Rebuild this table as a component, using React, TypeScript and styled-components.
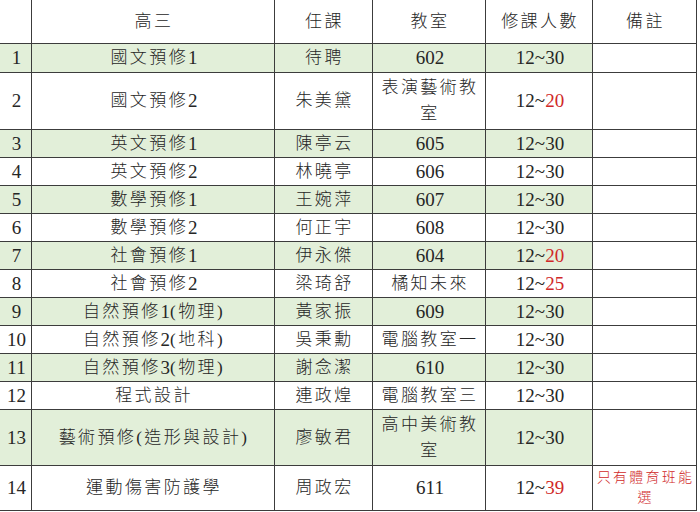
import styled, { createGlobalStyle } from "styled-components";

const GlobalStyle = createGlobalStyle`
    html, body {
        margin: 0;
        padding: 0;
        background: #ffffff;
    }
    body {
        font-family: "Liberation Serif", "Noto Sans CJK TC", serif;
        color: #262626;
    }
`;

type Course = {
    no: number;
    name: string;
    teacher: string;
    room: string;
    limit: number;
    redLimit?: boolean;
    note?: string;
    height: number;
};

const courses: Course[] = [
    { no: 1, name: "國文預修1", teacher: "待聘", room: "602", limit: 30, height: 29 },
    { no: 2, name: "國文預修2", teacher: "朱美黛", room: "表演藝術教室", limit: 20, redLimit: true, height: 57 },
    { no: 3, name: "英文預修1", teacher: "陳亭云", room: "605", limit: 30, height: 28 },
    { no: 4, name: "英文預修2", teacher: "林曉亭", room: "606", limit: 30, height: 28 },
    { no: 5, name: "數學預修1", teacher: "王婉萍", room: "607", limit: 30, height: 28 },
    { no: 6, name: "數學預修2", teacher: "何正宇", room: "608", limit: 30, height: 28 },
    { no: 7, name: "社會預修1", teacher: "伊永傑", room: "604", limit: 20, redLimit: true, height: 28 },
    { no: 8, name: "社會預修2", teacher: "梁琦舒", room: "橘知未來", limit: 25, redLimit: true, height: 28 },
    { no: 9, name: "自然預修1(物理)", teacher: "黃家振", room: "609", limit: 30, height: 28 },
    { no: 10, name: "自然預修2(地科)", teacher: "吳秉勳", room: "電腦教室一", limit: 30, height: 28 },
    { no: 11, name: "自然預修3(物理)", teacher: "謝念潔", room: "610", limit: 30, height: 28 },
    { no: 12, name: "程式設計", teacher: "連政煌", room: "電腦教室三", limit: 30, height: 28 },
    { no: 13, name: "藝術預修(造形與設計)", teacher: "廖敏君", room: "高中美術教室", limit: 30, height: 56 },
    { no: 14, name: "運動傷害防護學", teacher: "周政宏", room: "611", limit: 39, redLimit: true, note: "只有體育班能選", height: 45 },
];

const isNumeric = (s: string) => /^\d+$/.test(s);

// 글자 사이 숫자는 조금 크게 (원본 엑셀 폰트 느낌)
function Mixed({ text }: { text: string }) {
    const parts = text.split(/(\d+)/).filter(Boolean);
    return (
        <>
            {parts.map((p, i) => (isNumeric(p) ? <Digit key={i}>{p}</Digit> : <span key={i}>{p}</span>))}
        </>
    );
}

export default function App() {
    return (
        <>
            <GlobalStyle />
            <Sheet>
                <Row $height={44}>
                    <Cell />
                    <Cell>高三</Cell>
                    <Cell>任課</Cell>
                    <Cell>教室</Cell>
                    <Cell>修課人數</Cell>
                    <Cell>備註</Cell>
                </Row>

                {courses.map((c) => {
                    const green = c.no % 2 === 1;
                    return (
                        <Row key={c.no} $height={c.height}>
                            <Cell $green={green} $num>{c.no}</Cell>
                            <Cell $green={green}>
                                <Mixed text={c.name} />
                            </Cell>
                            <Cell $green={green}>{c.teacher}</Cell>
                            <Cell $green={green} $num={isNumeric(c.room)}>{c.room}</Cell>
                            <Cell $green={green} $num>
                                12~{c.redLimit ? <Red>{c.limit}</Red> : c.limit}
                            </Cell>
                            <Cell>{c.note && <Note>{c.note}</Note>}</Cell>
                        </Row>
                    );
                })}
            </Sheet>
        </>
    );
}

// --- Styled Components ---

const Sheet = styled.div`
    display: flex;
    flex-direction: column;
    width: 697px;
`;

const Row = styled.div<{ $height: number }>`
    display: grid;
    grid-template-columns: 32px 243px 98px 113px 107px 104px;
    height: ${({ $height }) => $height}px;
`;

const Cell = styled.div<{ $green?: boolean; $num?: boolean }>`
    display: flex;
    align-items: center;
    justify-content: center;
    text-align: center;
    box-sizing: border-box;
    border-right: 1px solid #3c3c3c;
    border-bottom: 1px solid #3c3c3c;
    background: ${({ $green }) => ($green ? "#e2efd9" : "#ffffff")};
    font-size: ${({ $num }) => ($num ? "19px" : "17px")};
    font-weight: 300;
    letter-spacing: ${({ $num }) => ($num ? "0" : "2.4px")};
    line-height: 26px;
    padding: 0 1px 0 3px;
    overflow: hidden;
    word-break: break-all;
`;

const Digit = styled.span`
    font-size: 19px;
    letter-spacing: 0;
`;

const Red = styled.span`
    color: #d02828;
`;

const Note = styled.span`
    color: #d02828;
    font-size: 14px;
    letter-spacing: 2.2px;
    line-height: 20px;
`;
